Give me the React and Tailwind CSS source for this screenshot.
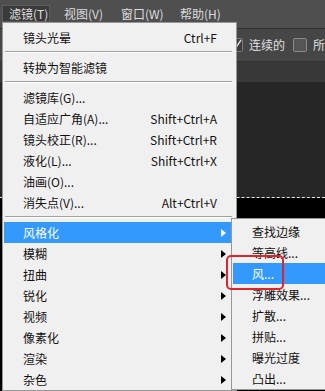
import React from "react";

const FONT = "font-['Microsoft_YaHei','Noto_Sans_CJK_SC','Noto_Sans',sans-serif]";

function Arrow({ white }) {
  return (
    <svg width="5" height="8" viewBox="0 0 5 8" className="absolute right-[9px] top-[7px]">
      <path d="M0 0 L5 4 L0 8 Z" fill={white ? "#ffffff" : "#000000"} />
    </svg>
  );
}

function Item({ label, shortcut, arrow, active }) {
  return (
    <div
      className={`relative flex h-[21px] items-center whitespace-nowrap pl-[19px] text-[12px] leading-none ${
        active ? "bg-[#3399ff] text-white" : "text-[#111111]"
      }`}
    >
      <span>{label}</span>
      {shortcut && <span className="ml-auto pr-[18px]">{shortcut}</span>}
      {arrow && <Arrow white={active} />}
    </div>
  );
}

function Sep() {
  return (
    <div className="h-[9px] pt-[3px] pl-[1px] pr-[3px]">
      <div className="h-px bg-[#a0a0a0]" />
      <div className="h-px bg-white" />
    </div>
  );
}

export default function App() {
  return (
    <div className={`relative h-[391px] w-[325px] overflow-hidden bg-[#282828] ${FONT}`}>
      {/* menu bar */}
      <div className="flex h-[28px] items-start whitespace-nowrap bg-[#4f4f4f] pt-[5px] text-[12px] leading-none text-[#dcdcdc]">
        <div className="ml-[2px] flex h-[17px] w-[48px] shrink-0 items-center border border-[#5c5c5c] bg-[#3a3a3a] pl-[6px]">滤镜(T)</div>
        <span className="ml-[14px] mt-[3px] w-[57px] shrink-0">视图(V)</span>
        <span className="mt-[3px] w-[59px] shrink-0">窗口(W)</span>
        <span className="mt-[3px] shrink-0">帮助(H)</span>
      </div>
      <div className="h-px bg-[#2e2e2e]" />
      {/* options bar */}
      <div className="flex h-[32px] items-center whitespace-nowrap bg-[#464646] pl-[229px] text-[12px] leading-none text-[#e0e0e0]">
        <div className="relative h-[14px] w-[14px] shrink-0 rounded-[2px] border border-[#7a7a7a] bg-[#3c3c3c]">
          <svg width="12" height="12" viewBox="0 0 12 12" className="absolute left-0 top-0">
            <path d="M2 6 L5 10 L11 1" stroke="#d8d8d8" strokeWidth="1.4" fill="none" />
          </svg>
        </div>
        <span className="ml-[6px] shrink-0">连续的</span>
        <div className="ml-[8px] h-[14px] w-[14px] shrink-0 rounded-[2px] border border-[#8a8a8a] bg-[#555555]" />
        <span className="ml-[6px] shrink-0">所</span>
      </div>
      <div className="h-px bg-[#333333]" />
      {/* tab bar */}
      <div className="h-[20px] bg-[#383838]" />
      {/* canvas */}
      <div className="h-[116px] border-b border-dashed border-[#e8e8e8] bg-[#262626]" />
      <div className="h-[200px] bg-black" />

      {/* main menu */}
      <div className="absolute left-[2px] top-[22px] w-[235px] border border-[#979797] bg-[#f0f0f0] px-[1px] pt-[4px]">
        <Item label="镜头光晕" shortcut="Ctrl+F" />
        <Sep />
        <Item label="转换为智能滤镜" />
        <Sep />
        <Item label="滤镜库(G)..." />
        <Item label="自适应广角(A)..." shortcut="Shift+Ctrl+A" />
        <Item label="镜头校正(R)..." shortcut="Shift+Ctrl+R" />
        <Item label="液化(L)..." shortcut="Shift+Ctrl+X" />
        <Item label="油画(O)..." />
        <Item label="消失点(V)..." shortcut="Alt+Ctrl+V" />
        <Sep />
        <Item label="风格化" arrow active />
        <Item label="模糊" arrow />
        <Item label="扭曲" arrow />
        <Item label="锐化" arrow />
        <Item label="视频" arrow />
        <Item label="像素化" arrow />
        <Item label="渲染" arrow />
        <Item label="杂色" arrow />
      </div>

      {/* submenu */}
      <div className="absolute left-[231px] top-[218px] w-[120px] border border-[#979797] bg-[#f0f0f0] px-[1px] pt-[2px]">
        <Item label="查找边缘" />
        <Item label="等高线..." />
        <Item label="风..." active />
        <Item label="浮雕效果..." />
        <Item label="扩散..." />
        <Item label="拼贴..." />
        <Item label="曝光过度" />
        <Item label="凸出..." />
      </div>

      {/* red highlight */}
      <div className="absolute left-[226px] top-[255px] h-[35px] w-[58px] rounded-[5px] border-2 border-[#e0242a]" />
    </div>
  );
}
